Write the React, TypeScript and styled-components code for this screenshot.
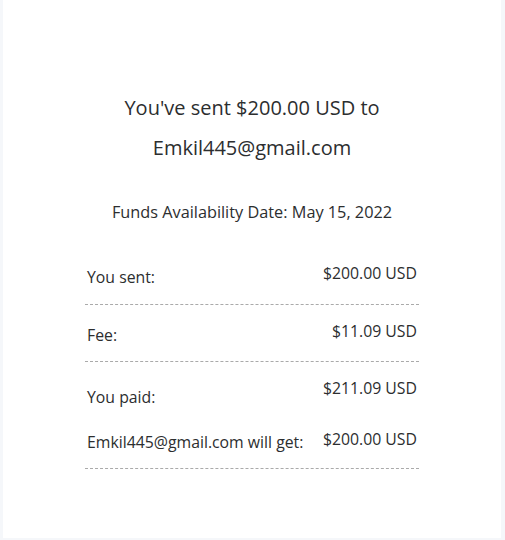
import React from "react";
import styled, { createGlobalStyle } from "styled-components";

const Global = createGlobalStyle`
  html, body { margin: 0; padding: 0; background: #f5f7fa; }
  body { font-family: "Open Sans", "Noto Sans", sans-serif; color: #2c2e2f; }
`;

const Card = styled.div`
  box-sizing: border-box;
  margin: 0 4px 0 3px;
  height: 538px;
  background: #ffffff;
  padding-top: 88px;
  display: flex;
  flex-direction: column;
  align-items: center;
`;

const Heading = styled.h1`
  margin: 0;
  font-size: 20px;
  line-height: 40px;
  font-weight: 400;
  text-align: center;
  color: #2c2e2f;
`;

const Availability = styled.p`
  margin: 32px 0 0;
  font-size: 16.3px;
  line-height: 24px;
  text-align: center;
`;

const Table = styled.div`
  width: 334px;
  margin-top: 23px;
  display: flex;
  flex-direction: column;
`;

const Row = styled.div<{ $divider?: boolean; $bottom: number }>`
  display: flex;
  justify-content: space-between;
  align-items: flex-start;
  padding: 16px 2px ${(p) => p.$bottom}px;
  border-bottom: ${(p) => (p.$divider ? "1px dashed #aaaaaa" : "none")};
  font-size: 15.8px;
  line-height: 20px;
`;

const Label = styled.span<{ $offset: number }>`
  margin-top: ${(p) => p.$offset}px;
`;

const Value = styled.span``;

const rows = [
  { label: "You sent:", value: "$200.00 USD", divider: true, offset: 4, bottom: 17 },
  { label: "Fee:", value: "$11.09 USD", divider: true, offset: 4, bottom: 16 },
  { label: "You paid:", value: "$211.09 USD", divider: false, offset: 9, bottom: 6 },
  { label: "Emkil445@gmail.com will get:", value: "$200.00 USD", divider: true, offset: 3, bottom: 16 },
];

export default function App() {
  return (
    <>
      <Global />
      <Card>
        <Heading>
          You've sent $200.00 USD to
          <br />
          Emkil445@gmail.com
        </Heading>
        <Availability>Funds Availability Date: May 15, 2022</Availability>
        <Table>
          {rows.map((r) => (
            <Row key={r.label} $divider={r.divider} $bottom={r.bottom}>
              <Label $offset={r.offset}>{r.label}</Label>
              <Value>{r.value}</Value>
            </Row>
          ))}
        </Table>
      </Card>
    </>
  );
}
